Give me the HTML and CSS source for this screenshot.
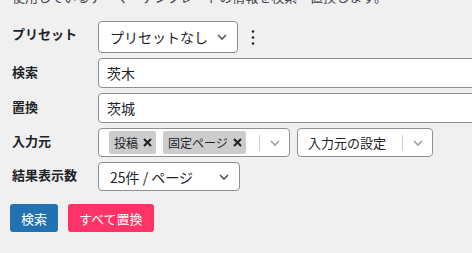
FILE: index.html
```html
<!DOCTYPE html>
<html lang="ja">
<head>
<meta charset="utf-8">
<link rel="stylesheet" href="styles.css">
</head>
<body>
<div class="page">
  <p class="intro">使用しているテーマ・テンプレートの情報を検索・置換します。</p>
  <div class="form">
    <div class="row first">
      <label class="label">プリセット</label>
      <div class="field">
        <div class="select preset">
          <span>プリセットなし</span>
          <svg class="chev" width="12" height="8" viewBox="0 0 12 8"><path d="M2 2l4 4 4-4" fill="none" stroke="#50575e" stroke-width="1.6"/></svg>
        </div>
        <svg class="kebab" width="4" height="16" viewBox="0 0 4 16"><circle cx="2" cy="2.5" r="1.3"/><circle cx="2" cy="8.5" r="1.3"/><circle cx="2" cy="14.5" r="1.3"/></svg>
      </div>
    </div>
    <div class="row">
      <label class="label">検索</label>
      <div class="field"><div class="input">茨木</div></div>
    </div>
    <div class="row">
      <label class="label">置換</label>
      <div class="field"><div class="input">茨城</div></div>
    </div>
    <div class="row short">
      <label class="label">入力元</label>
      <div class="field">
        <div class="multi">
          <div class="values">
            <span class="tag">投稿<svg class="x" width="9" height="9" viewBox="0 0 9 9"><path d="M1 1l7 7M8 1l-7 7" stroke="#1d2327" stroke-width="2.1"/></svg></span>
            <span class="tag">固定ページ<svg class="x" width="9" height="9" viewBox="0 0 9 9"><path d="M1 1l7 7M8 1l-7 7" stroke="#1d2327" stroke-width="2.1"/></svg></span>
          </div>
          <div class="indicator">
            <svg width="12" height="8" viewBox="0 0 12 8"><path d="M2 2l4 4 4-4" fill="none" stroke="#a0a0a0" stroke-width="1.6"/></svg>
          </div>
        </div>
        <div class="multi source">
          <div class="values"><span class="ph">入力元の設定</span></div>
          <div class="indicator">
            <svg width="12" height="8" viewBox="0 0 12 8"><path d="M2 2l4 4 4-4" fill="none" stroke="#a0a0a0" stroke-width="1.6"/></svg>
          </div>
        </div>
      </div>
    </div>
    <div class="row short">
      <label class="label">結果表示数</label>
      <div class="field">
        <div class="select perpage">
          <span>25件 / ページ</span>
          <svg class="chev" width="12" height="8" viewBox="0 0 12 8"><path d="M2 2l4 4 4-4" fill="none" stroke="#50575e" stroke-width="1.6"/></svg>
        </div>
      </div>
    </div>
  </div>
  <div class="actions">
    <button class="btn primary">検索</button>
    <button class="btn danger">すべて置換</button>
  </div>
</div>
</body>
</html>
```

FILE: styles.css
```css
* { box-sizing: border-box; }
html, body {
  margin: 0;
  background: #f0f0f1;
}
body {
  font-family: "Noto Sans CJK JP", "Noto Sans", sans-serif;
  color: #1d2327;
  width: 472px;
  height: 253px;
  overflow: hidden;
}
.page {
  padding: 0 0 0 10px;
}
.intro {
  margin: -12px 0 0 2px;
  font-size: 13px;
  line-height: 18px;
  color: #3c434a;
  white-space: nowrap;
}
.form {
  margin-top: 15px;
  display: flex;
  flex-direction: column;
  gap: 5px;
}
.row {
  display: flex;
  align-items: center;
  height: 30px;
}
.row.first { height: 32px; }
.row.short { height: 29px; }
.label {
  width: 88px;
  flex: none;
  padding-left: 2px;
  padding-bottom: 4px;
  font-size: 13px;
  font-weight: 700;
  line-height: 1;
}
.row.first .label { padding-bottom: 7px; }
.field {
  display: flex;
  align-items: center;
  flex: 1;
  height: 100%;
  gap: 7px;
  min-width: 0;
}
.select {
  height: 100%;
  background: #fff;
  border: 1px solid #8c8f94;
  border-radius: 4px;
  display: flex;
  align-items: center;
  justify-content: space-between;
  font-size: 14px;
  padding: 0 9px 0 11px;
}
.select.preset { width: 140px; }
.select.perpage { width: 142px; }
.kebab { fill: #1d2327; margin-left: 6px; }
.input {
  height: 100%;
  width: 400px;
  flex: none;
  background: #fff;
  border: 1px solid #8c8f94;
  border-radius: 4px;
  font-size: 14px;
  display: flex;
  align-items: center;
  padding-left: 8px;
}
.multi {
  height: 100%;
  width: 192px;
  background: #fff;
  border: 1px solid #8c8f94;
  border-radius: 4px;
  display: flex;
  align-items: center;
}
.multi.source { width: 136px; }
.values {
  flex: 1;
  display: flex;
  align-items: center;
  gap: 7px;
  padding-left: 10px;
}
.tag {
  background: #cccccc;
  border-radius: 2px;
  height: 23px;
  display: flex;
  align-items: center;
  gap: 5px;
  padding: 0 4px 0 5px;
  font-size: 12px;
}
.x { flex: none; }
.ph { font-size: 13px; }
.indicator {
  width: 30px;
  height: 16px;
  border-left: 1px solid #cccccc;
  display: flex;
  align-items: center;
  justify-content: center;
}
.actions {
  display: flex;
  gap: 10px;
  margin-top: 13px;
}
.btn {
  height: 28px;
  border: none;
  border-radius: 3px;
  color: #fff;
  font-family: inherit;
  font-size: 13px;
  padding: 0 11px;
}
.btn.primary { background: #2271b1; }
.btn.danger { background: #ff3366; }
```
